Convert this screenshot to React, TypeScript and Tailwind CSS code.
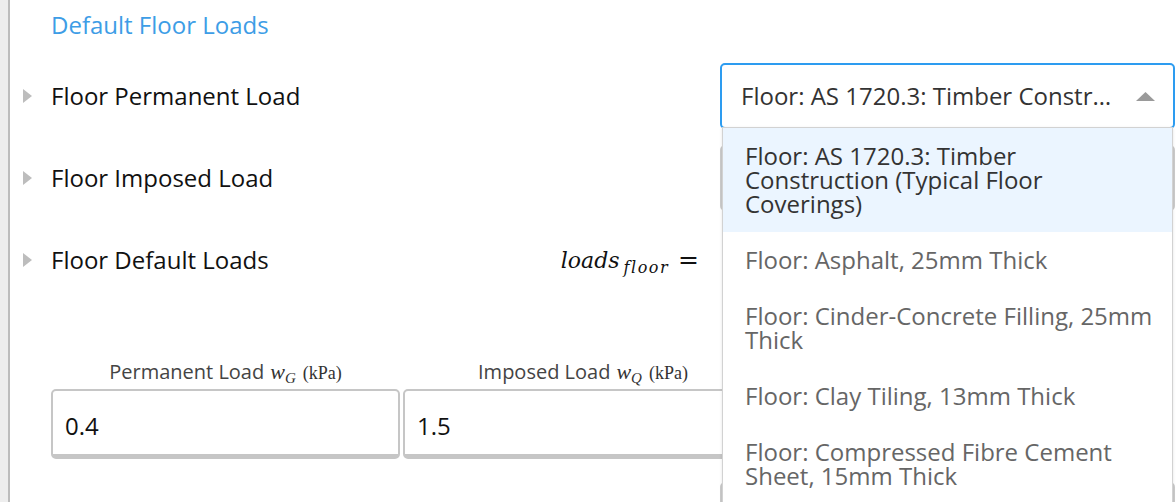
import React from 'react';

const options = [
  'Floor: AS 1720.3: Timber Construction (Typical Floor Coverings)',
  'Floor: Asphalt, 25mm Thick',
  'Floor: Cinder-Concrete Filling, 25mm Thick',
  'Floor: Clay Tiling, 13mm Thick',
  'Floor: Compressed Fibre Cement Sheet, 15mm Thick',
  'Floor: Concrete, per 25mm Thick',
];

const Caret = () => (
  <svg width="9" height="14" viewBox="0 0 9 14" className="shrink-0">
    <polygon points="0,0 9,7 0,14" fill="#bdbdbd" />
  </svg>
);

const Row = ({ label, extra, children }: { label: string; extra?: React.ReactNode; children?: React.ReactNode }) => (
  <div className="flex h-[82px] items-center">
    <div className="flex flex-1 items-center pl-[13px]">
      <Caret />
      <span className="ml-[19px] text-[24px] text-[#111]">{label}</span>
      {extra}
    </div>
    <div className="w-[455px] shrink-0">{children}</div>
  </div>
);

const Equation = () => (
  <div className="ml-auto mr-[21px] flex items-baseline font-['DejaVu_Serif',serif] text-[#111]">
    <span className="text-[22px] italic">loads</span>
    <span className="relative top-[5px] ml-[4px] text-[16px] italic tracking-[1.5px]">floor</span>
    <span className="ml-[9px] text-[25px]">=</span>
  </div>
);

const FieldLabel = ({ text, sym, sub }: { text: string; sym: string; sub: string }) => (
  <div className="flex h-[24px] items-baseline justify-center text-[20px] leading-[24px] text-[#444]">
    <span>{text}</span>
    <span className="ml-[6px] font-['Liberation_Serif',serif] text-[22px] italic text-[#333]">{sym}</span>
    <span className="relative top-[4px] font-['Liberation_Serif',serif] text-[15px] italic text-[#333]">{sub}</span>
    <span className="ml-[7px] font-['Liberation_Serif',serif] text-[18px] text-[#333]">(kPa)</span>
  </div>
);

const Field = ({ value }: { value: string }) => (
  <div className="mt-[5px] flex h-[70px] items-center rounded-[5px] border-2 border-b-[5px] border-[#c6c6c6] bg-white pl-[12px] pt-[6px] text-[24px] text-[#111]">
    {value}
  </div>
);

export default function App() {
  return (
    <div className="flex h-[502px] w-[1176px] overflow-hidden bg-white font-['Open_Sans',sans-serif]">
      <div className="w-[8px] shrink-0 border-r-2 border-[#bdbdbd] bg-[#eeeeee] box-content" />
      <div className="flex-1 pr-[1px]">
        <div className="pl-[41px] pt-[9px] text-[24px] leading-[32px] text-[#3d9de6]">Default Floor Loads</div>
        <div className="mt-[14px]">
          <Row label="Floor Permanent Load">
            <div className="relative">
              <div className="flex h-[66px] items-center rounded-[5px] border-2 border-[#2d9cf0] bg-white pl-[19px] pr-[18px]">
                <span className="w-[372px] truncate text-[24px] text-[#333]">{options[0]}</span>
                <svg width="19" height="9" viewBox="0 0 19 9" className="ml-auto">
                  <polygon points="0,9 9.5,0 19,9" fill="#9a9a9a" />
                </svg>
              </div>
              <ul className="absolute left-[2px] right-[2px] top-[64px] z-10 border border-[#d2d2d2] bg-white shadow-sm">
                {options.map((o, i) => (
                  <li
                    key={o}
                    className={`py-[16px] pl-[22px] pr-[18px] text-[24px] leading-[24px] ${i === 0 ? 'bg-[#ebf5ff] text-[#333]' : 'text-[#666]'}`}
                  >
                    {o}
                  </li>
                ))}
              </ul>
            </div>
          </Row>
          <Row label="Floor Imposed Load">
            <div className="h-[66px] rounded-[5px] border-2 border-b-[4px] border-[#cccccc] bg-white" />
          </Row>
          <Row label="Floor Default Loads" extra={<Equation />} />
        </div>
        <div className="grid grid-cols-[349px_349px] gap-x-[3px] pb-[15px] pl-[41px] pt-[59px]">
          <div>
            <FieldLabel text="Permanent Load" sym="w" sub="G" />
            <Field value="0.4" />
          </div>
          <div className="w-[360px]">
            <FieldLabel text="Imposed Load" sym="w" sub="Q" />
            <Field value="1.5" />
          </div>
        </div>
        <Row label="">
          <div className="h-[66px] rounded-[5px] border-2 border-[#cccccc] bg-white" />
        </Row>
      </div>
    </div>
  );
}
